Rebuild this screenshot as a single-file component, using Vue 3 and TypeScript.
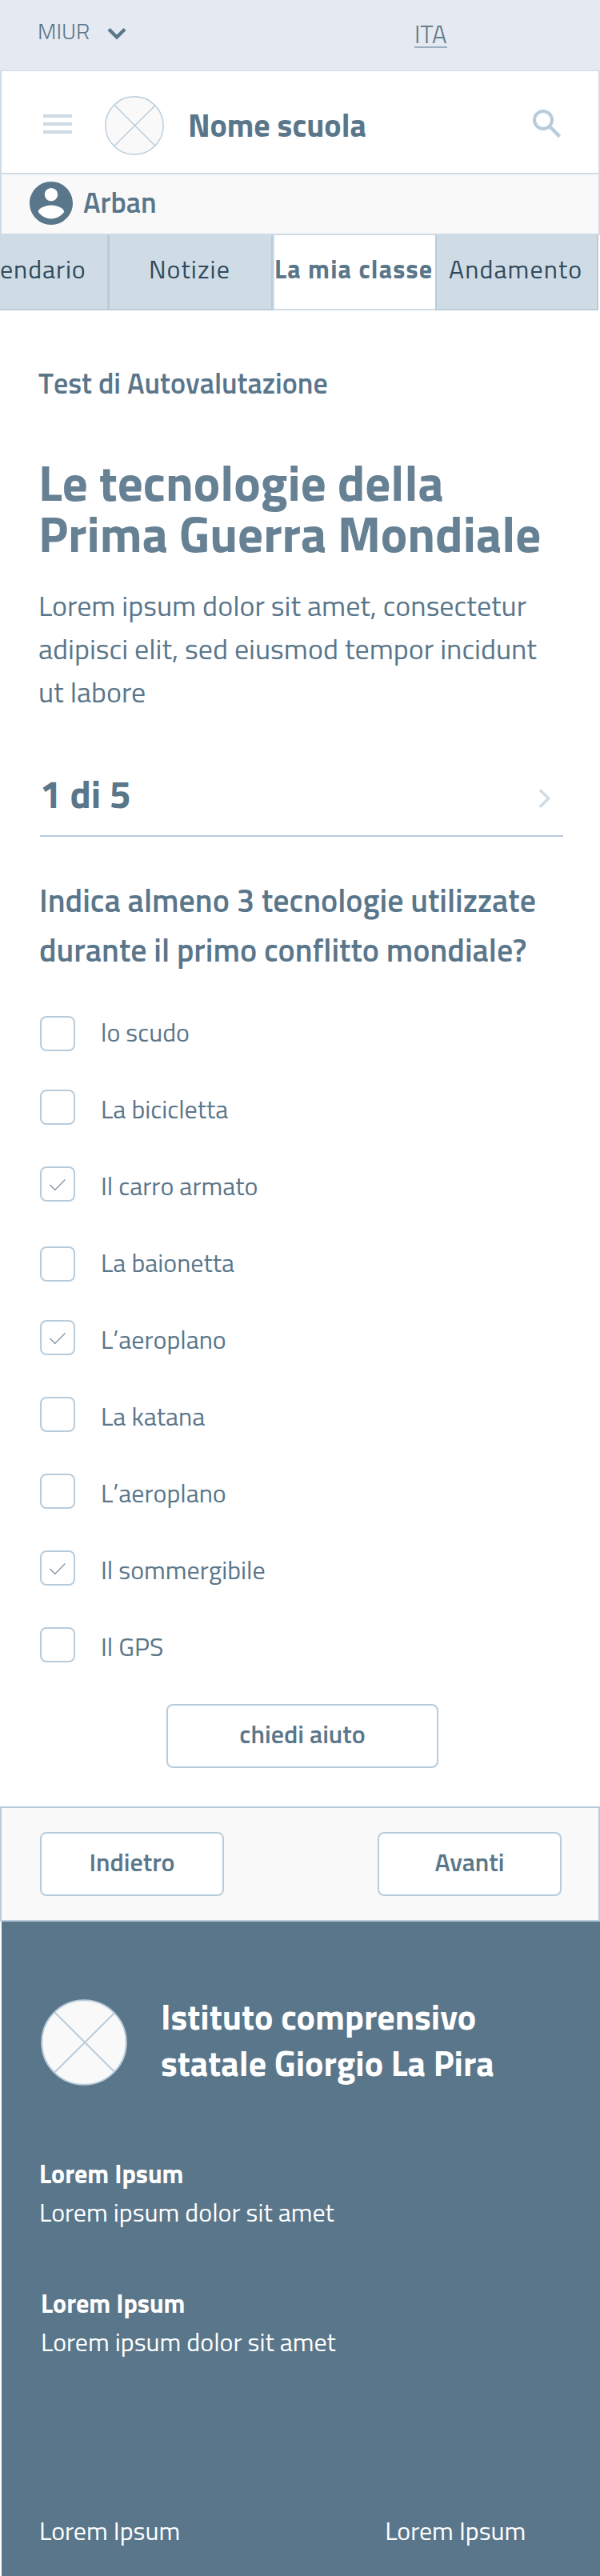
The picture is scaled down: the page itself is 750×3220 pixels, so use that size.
<script setup lang="ts">
interface Answer {
  label: string
  checked: boolean
  lowered?: boolean
}

interface Tab {
  label: string
  kind: string
}

const tabs: Tab[] = [
  { label: 'endario', kind: 'first' },
  { label: 'Notizie', kind: 'second' },
  { label: 'La mia classe', kind: 'active' },
  { label: 'Andamento', kind: 'last' },
]

const answers: Answer[] = [
  { label: 'lo scudo', checked: false, lowered: true },
  { label: 'La bicicletta', checked: false },
  { label: 'Il carro armato', checked: true },
  { label: 'La baionetta', checked: false, lowered: true },
  { label: 'L’aeroplano', checked: true },
  { label: 'La katana', checked: false },
  { label: 'L’aeroplano', checked: false },
  { label: 'Il sommergibile', checked: true },
  { label: 'Il GPS', checked: false },
]
</script>

<template>
  <div class="page">
    <div class="topbar">
      <span class="miur">MIUR</span>
      <svg class="miur-arrow" width="28" height="20" viewBox="0 0 28 20">
        <path d="M4 4.5 14 14.5 24 4.5" fill="none" stroke="#5a768a" stroke-width="4.4" />
      </svg>
      <span class="lang">ITA</span>
    </div>

    <header class="header">
      <svg class="menu" width="36" height="24" viewBox="0 0 36 24">
        <path d="M0 2H36M0 12H36M0 22H36" stroke="#cfdce5" stroke-width="4" />
      </svg>
      <svg class="crest" width="74" height="74" viewBox="0 0 74 74">
        <circle cx="37" cy="37" r="36.2" fill="#f9f9f9" stroke="#b9ccdb" stroke-width="1.4" />
        <path d="M11.7 11 63.3 62.5M63.3 11.5 11.7 62.5" stroke="#b9ccdb" stroke-width="1.4" />
      </svg>
      <span class="school">Nome scuola</span>
      <svg class="search" width="36" height="36" viewBox="0 0 36 36">
        <circle cx="13" cy="13" r="11" fill="none" stroke="#b9ccdb" stroke-width="4" />
        <path d="M22 22 33.6 33.6" stroke="#b9ccdb" stroke-width="4.4" />
      </svg>
    </header>

    <div class="user">
      <svg class="avatar" width="54" height="54" viewBox="2 2 20 20">
        <circle cx="12" cy="12" r="9" fill="#fff" />
        <path
          fill="#5a768a"
          d="M12 2C6.48 2 2 6.48 2 12s4.48 10 10 10 10-4.48 10-10S17.52 2 12 2zm0 3c1.66 0 3 1.34 3 3s-1.34 3-3 3-3-1.34-3-3 1.34-3 3-3zm0 14.2c-2.5 0-4.71-1.28-6-3.22.03-1.99 4-3.08 6-3.08 1.99 0 5.97 1.09 6 3.08-1.29 1.94-3.5 3.22-6 3.22z"
        />
      </svg>
      <span>Arban</span>
    </div>

    <nav class="tabs">
      <div v-for="tab in tabs" :key="tab.label" class="tab" :class="tab.kind">{{ tab.label }}</div>
    </nav>

    <main class="content">
      <h2 class="kicker">Test di Autovalutazione</h2>
      <h1 class="title">Le tecnologie della<br />Prima Guerra Mondiale</h1>
      <p class="intro">
        Lorem ipsum dolor sit amet, consectetur<br />adipisci elit, sed eiusmod tempor incidunt<br />ut labore
      </p>

      <div class="progress">
        <span>1 di 5</span>
        <svg class="next" width="16" height="24" viewBox="0 0 16 24">
          <path d="M1.8 1.2 12.8 12 1.8 22.8" fill="none" stroke="#cfdce5" stroke-width="3.4" />
        </svg>
      </div>

      <p class="question">Indica almeno 3 tecnologie utilizzate<br />durante il primo conflitto mondiale?</p>

      <ul class="answers">
        <li v-for="(answer, i) in answers" :key="i" class="answer">
          <span class="box" :class="{ lowered: answer.lowered }">
            <svg v-if="answer.checked" width="40" height="40" viewBox="2 2 40 40">
              <path d="M12.3 22.8 18.7 29.3 31.5 16.3" fill="none" stroke="#6b8496" stroke-width="1.2" />
            </svg>
          </span>
          <span class="answer-label">{{ answer.label }}</span>
        </li>
      </ul>

      <button class="btn help">chiedi aiuto</button>
    </main>

    <div class="pager">
      <button class="btn">Indietro</button>
      <button class="btn">Avanti</button>
    </div>

    <footer class="footer">
      <div class="institute">
        <svg width="108" height="108" viewBox="0 0 108 108">
          <circle cx="54" cy="54" r="52.8" fill="#f9f9f9" stroke="#b9ccdb" stroke-width="2" />
          <path d="M17.5 16.5 92.5 91.2M92.5 16.8 17.5 91.2" stroke="#b9ccdb" stroke-width="2" />
        </svg>
        <p class="institute-name">Istituto comprensivo<br />statale Giorgio La Pira</p>
      </div>
      <div class="info">
        <strong>Lorem Ipsum</strong>
        <span>Lorem ipsum dolor sit amet</span>
      </div>
      <div class="info second-info">
        <strong>Lorem Ipsum</strong>
        <span>Lorem ipsum dolor sit amet</span>
      </div>
      <div class="links">
        <span>Lorem Ipsum</span>
        <span>Lorem Ipsum</span>
      </div>
    </footer>
  </div>
</template>

<style>
html,
body {
  margin: 0;
  background: #fff;
}
</style>

<style scoped>
* {
  box-sizing: border-box;
}
.page {
  width: 750px;
  height: 3220px;
  overflow: hidden;
  background: #fff;
  color: #5a768a;
  font-family: 'Titillium Web', 'Open Sans', sans-serif;
  font-size: 32px;
  font-weight: 400;
  white-space: nowrap;
}
h1,
h2,
p,
ul {
  margin: 0;
  padding: 0;
}
.topbar {
  display: flex;
  align-items: flex-start;
  height: 88px;
  padding-left: 47px;
  background: #e5e9f1;
  font-weight: 300;
}
.miur {
  width: 85px;
  margin-top: 19px;
  font-size: 28px;
  line-height: 40px;
}
.miur-arrow {
  margin-top: 32px;
}
.lang {
  margin: 22px 0 0 358px;
  height: 38px;
  border-bottom: 2px solid #9bb0c1;
  font-size: 31px;
  line-height: 41px;
}
.header {
  display: flex;
  align-items: flex-start;
  height: 130px;
  border: 2px solid #cfdce5;
  border-top-width: 1px;
  padding-left: 52px;
}
.menu {
  margin-top: 54px;
}
.crest {
  margin: 31px 0 0 41px;
}
.school {
  margin: 38px 0 0 30px;
  width: 431px;
  font-size: 40px;
  font-weight: 700;
  line-height: 60px;
}
.search {
  margin-top: 48px;
}
.user {
  display: flex;
  align-items: center;
  height: 76px;
  border: 2px solid #cfdce5;
  border-top: 0;
  background: #f9f9f9;
  padding: 0 0 4px 35px;
  font-size: 36px;
  font-weight: 600;
  line-height: 54px;
}
.avatar {
  margin: 2px 13px 0 0;
}
.tabs {
  display: flex;
  height: 94px;
}
.tab {
  height: 94px;
  padding-top: 18px;
  background: #cfdce5;
  border: solid #b9ccdb;
  border-width: 0 2px 2px 0;
  color: #304a5c;
  line-height: 48px;
  letter-spacing: 1.1px;
}
.first {
  width: 136px;
  letter-spacing: 0.9px;
}
.second {
  width: 205px;
  border-left-width: 1px;
  padding-left: 49px;
}
.active {
  width: 203px;
  border-color: #cfdce5;
  border-width: 0 0 2px 2px;
  background: #fff;
  color: #5a768a;
  font-weight: 700;
  letter-spacing: 1.2px;
}
.last {
  width: 204px;
  border-left-width: 2px;
  padding-left: 15px;
}
.content {
  height: 1870px;
  padding-left: 48px;
}
.kicker {
  padding-top: 66px;
  font-size: 36px;
  font-weight: 600;
  line-height: 50px;
  font-kerning: none;
}
.title {
  margin-top: 67px;
  font-size: 63px;
  font-weight: 700;
  line-height: 64px;
  color: #668094;
}
.intro {
  margin-top: 31px;
  font-size: 36px;
  line-height: 54px;
}
.progress {
  display: flex;
  width: 654px;
  height: 96px;
  margin: 58px 0 0 2px;
  border-bottom: 2px solid #b9ccdb;
  font-size: 48px;
  font-weight: 700;
  line-height: 85px;
}
.next {
  margin: 36px 15px 0 auto;
}
.question {
  margin: 49px 0 0 1px;
  font-size: 40px;
  font-weight: 600;
  line-height: 62px;
}
.answers {
  margin: 47px 0 0 2px;
  list-style: none;
}
.answer {
  display: flex;
  height: 96px;
}
.box {
  width: 44px;
  height: 44px;
  border: 2px solid #b9ccdb;
  border-radius: 8px;
}
.box.lowered {
  margin-top: 4px;
}
.box svg {
  display: block;
}
.answer-label {
  margin-left: 32px;
  line-height: 48px;
  font-kerning: none;
}
.btn {
  display: block;
  width: 230px;
  height: 80px;
  margin: 0;
  padding: 0 0 6px;
  border: 2px solid #b9ccdb;
  border-radius: 8px;
  background: #fff;
  color: inherit;
  font: inherit;
  font-weight: 600;
  line-height: 48px;
}
.help {
  width: 340px;
  margin-left: 160px;
}
.pager {
  display: flex;
  justify-content: space-between;
  height: 144px;
  padding: 30px 46px 0 48px;
  border: 2px solid #b9ccdb;
  background: #f9f9f9;
}
.footer {
  height: 818px;
  margin-left: 2px;
  padding: 97px 0 0 47px;
  background: #5a768a;
  color: #fff;
}
.institute {
  display: flex;
  align-items: flex-start;
  padding-left: 2px;
}
.institute-name {
  margin: -7px 0 0 42px;
  font-size: 44px;
  font-weight: 700;
  line-height: 58px;
}
.info {
  display: flex;
  flex-direction: column;
  margin-top: 85px;
  line-height: 48px;
}
.second-info {
  margin: 66px 0 0 2px;
}
.links {
  display: flex;
  gap: 256px;
  margin-top: 188px;
  line-height: 48px;
}
</style>
